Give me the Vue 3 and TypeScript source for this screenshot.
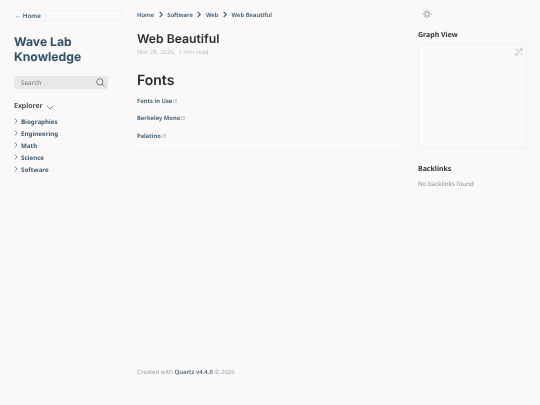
<script setup lang="ts">
const crumbs = ['Home', 'Software', 'Web']
const folders = ['Biographies', 'Engineering', 'Math', 'Science', 'Software']
const links = ['Fonts in Use', 'Berkeley Mono', 'Palatino']
</script>

<template>
  <div class="page">
    <aside class="left">
      <a class="home">← Home</a>
      <h1 class="brand">Wave Lab<br />Knowledge</h1>
      <div class="search">
        <span>Search</span>
        <svg width="9" height="9" viewBox="0 0 20 20" fill="none" stroke="#5a5a5f" stroke-width="1.7">
          <circle cx="8.5" cy="8.5" r="7" />
          <path d="M13.8 13.8 L19 19" />
        </svg>
      </div>
      <div class="explorer">
        <span>Explorer</span>
        <svg width="8" height="5" viewBox="0 0 12 8" fill="none" stroke="#5a5a5f" stroke-width="1.2">
          <path d="M1 1.5 L6 6.5 L11 1.5" />
        </svg>
      </div>
      <ul class="tree">
        <li v-for="f in folders" :key="f">
          <svg width="4" height="6" viewBox="0 0 6 10" fill="none" stroke="#5a5a5f" stroke-width="1.2">
            <path d="M1 1 L5 5 L1 9" />
          </svg>
          <span>{{ f }}</span>
        </li>
      </ul>
    </aside>

    <main class="center">
      <nav class="crumbs">
        <template v-for="c in crumbs" :key="c">
          <span>{{ c }}</span>
          <svg class="sep" width="4" height="7" viewBox="0 0 6 10" fill="none" stroke="#3c5066" stroke-width="1.6">
            <path d="M1 1 L5 5 L1 9" />
          </svg>
        </template>
        <span>Web Beautiful</span>
      </nav>
      <h1 class="title">Web Beautiful</h1>
      <p class="meta">Mar 28, 2026, &nbsp;1 min read</p>
      <h2 class="fonts">Fonts</h2>
      <div class="links">
        <p v-for="l in links" :key="l" class="link">
          <span>{{ l }}</span>
          <svg width="4" height="4" viewBox="0 0 10 10" fill="none" stroke="#8a97a5" stroke-width="1.2">
            <path d="M8.5 6 V9 H1 V1.5 H4 M5 1 H9 V5 M9 1 L4.5 5.5" />
          </svg>
        </p>
      </div>
      <hr class="rule" />
      <footer class="foot">Created with <b>Quartz v4.4.0</b> © 2026</footer>
    </main>

    <aside class="right">
      <svg class="sun" width="10" height="10" viewBox="0 0 20 20" fill="none" stroke="#5a5a5f" stroke-width="1.2">
        <circle cx="10" cy="10" r="4.5" />
        <path d="M10 1 V3.5 M10 16.5 V19 M1 10 H3.5 M16.5 10 H19 M3.6 3.6 L5.4 5.4 M14.6 14.6 L16.4 16.4 M3.6 16.4 L5.4 14.6 M14.6 5.4 L16.4 3.6" />
      </svg>
      <h3 class="side-h graph-h">Graph View</h3>
      <div class="graph">
        <svg class="expand" width="8" height="8" viewBox="0 0 18 18" fill="none" stroke="#d0d0d3" stroke-width="2.4">
          <path d="M2 16 L16 2 M2 2 L16 16 M11 2 H16 V7 M2 11 V16 H7" />
        </svg>
      </div>
      <h3 class="side-h back-h">Backlinks</h3>
      <p class="none">No backlinks found</p>
    </aside>
  </div>
</template>

<style>
html, body { margin: 0; background: #faf8f8; }
</style>

<style scoped>
.page {
  width: 540px;
  height: 405px;
  display: grid;
  grid-template-columns: 137px 263px 140px;
  background: #faf8f8;
  font-family: "Noto Sans", "Open Sans", sans-serif;
  text-rendering: geometricPrecision;
  overflow: hidden;
  filter: blur(0.25px);
}
.left { padding: 10px 13px 0 14px; }
.home {
  display: block;
  height: 9px;
  margin-right: 2px;
  margin-left: -1px;
  padding-left: 1px;
  line-height: 9px;
  font-size: 6.2px;
  font-weight: 600;
  color: #3c5a72;
  border: 1px solid #f3f1f1;
  border-radius: 3px;
}
.brand {
  margin: 14px 0 0;
  font: 700 12.2px/14.6px Inter, sans-serif;
  color: #2f5069;
}
.search {
  margin-top: 12px;
  width: 94px;
  height: 13px;
  box-sizing: border-box;
  padding: 0 3px 0 7px;
  background: #e9e8e8;
  border-radius: 2px;
  display: flex;
  align-items: center;
  justify-content: space-between;
  font-size: 6.4px;
  color: #77777b;
}
.explorer {
  margin-top: 13px;
  display: flex;
  align-items: center;
  gap: 3px;
  font-size: 7px;
  font-weight: 600;
  color: #3a3a3a;
  line-height: 10px;
}
.tree {
  list-style: none;
  margin: 3px 0 0;
  padding: 0;
}
.tree li {
  display: flex;
  align-items: center;
  gap: 3px;
  height: 12px;
  font-size: 6.2px;
  font-weight: 700;
  color: #3c5a72;
}
.center { padding-top: 10px; position: relative; }
.crumbs {
  display: flex;
  align-items: center;
  height: 9px;
  font-size: 5.9px;
  font-weight: 600;
  color: #3c5a72;
}
.sep { margin: 0 4.5px; }
.title {
  margin: 12px 0 0;
  font: 600 12.2px/16px Inter, sans-serif;
  color: #2b2b2b;
}
.meta {
  margin: 1px 0 0;
  font-size: 6px;
  line-height: 9px;
  color: #c0c0c0;
}
.fonts {
  margin: 15px 0 0;
  font: 600 14px/18px Inter, sans-serif;
  color: #2b2b2b;
}
.links { margin-top: 6px; }
.link {
  display: flex;
  align-items: center;
  gap: 1px;
  margin: 0 0 8.5px;
  height: 9px;
  font-size: 5.8px;
  font-weight: 700;
  color: #4f677b;
}
.rule {
  margin: 10px 0 0;
  border: 0;
  border-top: 1px solid #f2f0f0;
}
.foot {
  position: absolute;
  top: 368px;
  left: 0;
  font-size: 6px;
  line-height: 9px;
  color: #a0a0a4;
}
.foot b { font-weight: 600; color: #4f677b; }
.right { padding: 9px 13px 0 18px; }
.sun { display: block; margin-left: 4px; }
.side-h {
  margin: 0;
  font-size: 7px;
  font-weight: 700;
  line-height: 10px;
  color: #333;
}
.graph-h { margin-top: 12px; }
.graph {
  position: relative;
  margin-top: 3px;
  height: 105px;
  box-sizing: border-box;
  border: 1px solid #f0eeee;
  border-radius: 3px;
}
.expand { position: absolute; top: 3px; right: 3px; }
.back-h { margin-top: 16px; }
.none {
  margin: 4px 0 0;
  font-size: 6.2px;
  line-height: 9px;
  color: #8f8f93;
}
</style>
